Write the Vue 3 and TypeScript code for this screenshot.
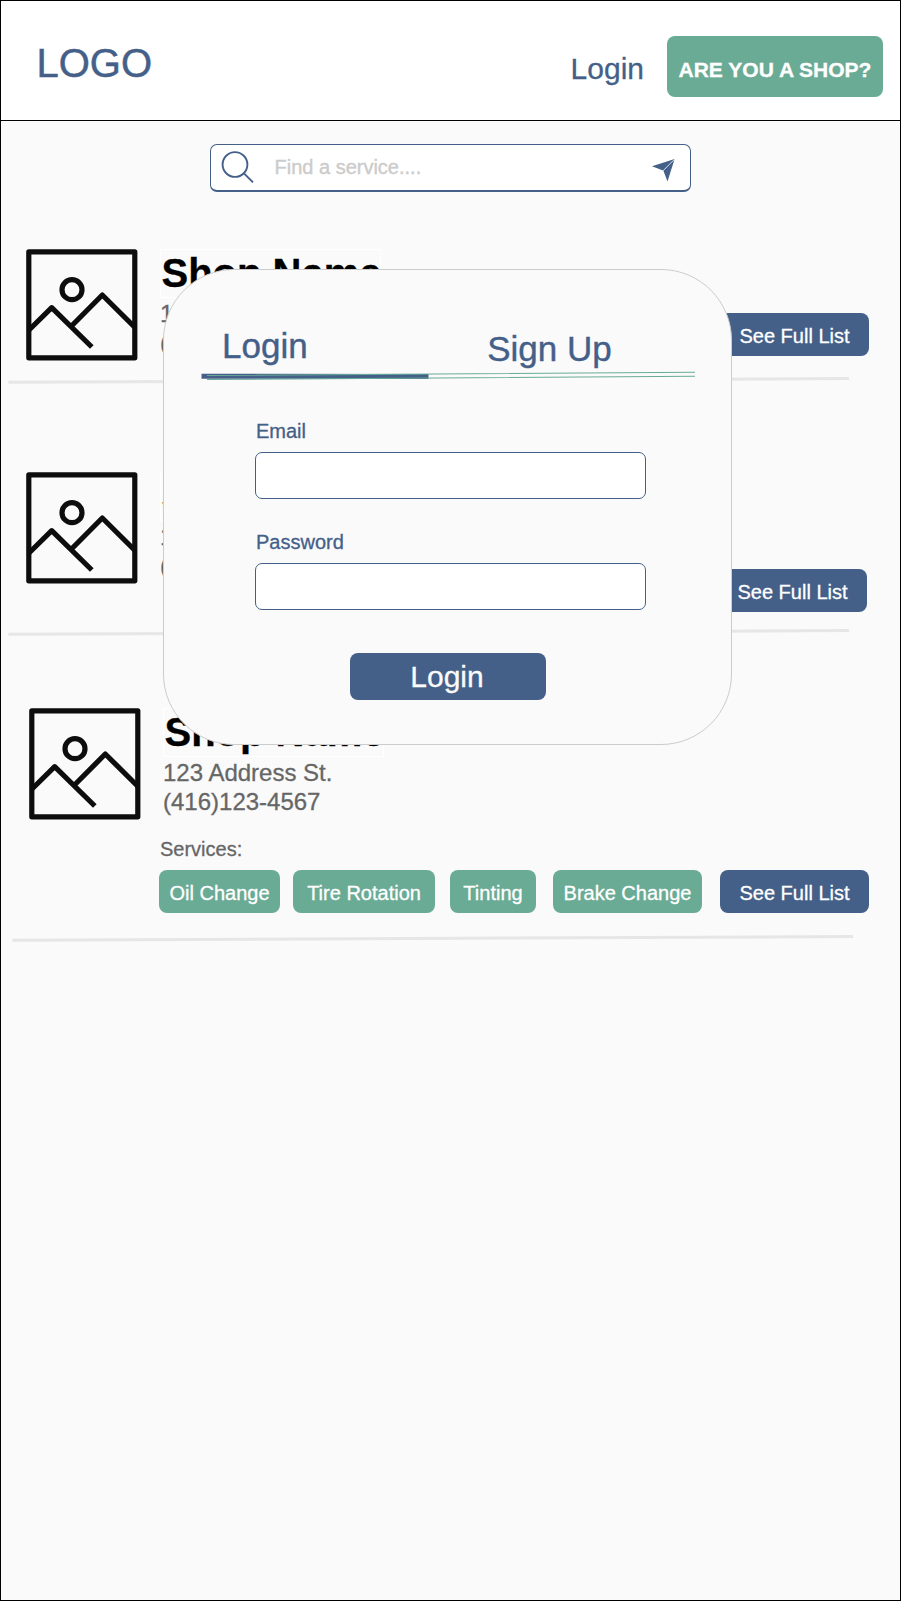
<script setup lang="ts">
import { ref } from 'vue'

interface Shop {
  id: string
  name: string
  address: string
  phone: string
  services: string[]
}

const shops: Shop[] = [
  { id: 'first', name: 'Shop Name', address: '123 Address St.', phone: '(416)123-4567', services: [] },
  { id: 'second', name: 'Shop Name', address: '123 Address St.', phone: '(416)123-4567', services: [] },
  {
    id: 'third',
    name: 'Shop Name',
    address: '123 Address St.',
    phone: '(416)123-4567',
    services: ['Oil Change', 'Tire Rotation', 'Tinting', 'Brake Change'],
  },
]

const query = ref('')
const email = ref('')
const password = ref('')

const pillClass = (service: string): string => 'pill-' + service.split(' ')[0].toLowerCase()
</script>

<template>
  <div class="page">
    <header class="header">
      <div class="logo">LOGO</div>
      <nav class="nav">
        <a class="login-link">Login</a>
        <button class="shop-cta">ARE YOU A SHOP?</button>
      </nav>
    </header>

    <div class="search">
      <svg class="search-icon" width="34" height="34" viewBox="0 0 34 34">
        <circle cx="14" cy="14.5" r="12.4" />
        <path d="M23 23.4L32 32.4" />
      </svg>
      <input v-model="query" class="search-input" placeholder="Find a service...." />
      <svg class="send-icon" width="24" height="24" viewBox="0 0 24 24">
        <path d="M0 7.2L22.6 0L15.5 22.6L11.6 12.2L11 11.5Z" />
        <path class="fold" d="M10.8 12L22.4 0.4" />
      </svg>
    </div>

    <main class="shops">
      <article v-for="shop in shops" :key="shop.id" class="shop" :class="shop.id">
        <div class="main">
          <svg class="picture" width="112" height="112" viewBox="0 0 112 112">
            <rect x="2.8" y="2.8" width="106" height="106" />
            <circle cx="46" cy="40.7" r="10" />
            <path d="M3 81L25.7 58.7L65.8 98M46 76.5L76.3 46L109 78.5" />
          </svg>
          <div class="info">
            <h2 class="name">{{ shop.name }}</h2>
            <p class="line">{{ shop.address }}</p>
            <p class="line phone">{{ shop.phone }}</p>
            <template v-if="shop.services.length">
              <p class="services-title">Services:</p>
              <div class="pills">
                <span v-for="s in shop.services" :key="s" class="pill" :class="pillClass(s)">{{ s }}</span>
              </div>
            </template>
          </div>
          <button class="full-list">See Full List</button>
        </div>
        <svg class="divider" width="842" height="10" viewBox="0 0 842 10">
          <path d="M0.5 6.3L841 2.5" />
        </svg>
      </article>
    </main>

    <section class="modal">
      <div class="tabs">
        <span class="tab">Login</span>
        <span class="tab signup">Sign Up</span>
      </div>
      <svg class="tab-line" width="496" height="12" viewBox="0 0 496 12">
        <path class="active" d="M1.5 6.2L228.5 6.6" />
        <path class="rail" d="M7 5.5L495 2.3M7 9.5L495 6.3" />
      </svg>
      <form class="form" @submit.prevent>
        <label class="label" for="email">Email</label>
        <input id="email" v-model="email" class="field" type="text" />
        <label class="label password" for="password">Password</label>
        <input id="password" v-model="password" class="field" type="password" />
        <button class="submit">Login</button>
      </form>
    </section>
  </div>
</template>

<style>
body {
  margin: 0;
}
</style>

<style scoped>
.page {
  position: relative;
  box-sizing: border-box;
  width: 901px;
  height: 1601px;
  border: 1px solid #000;
  background: #fafafa;
  overflow: hidden;
  font-family: 'Liberation Sans', Arial, sans-serif;
  color: #446088;
  -webkit-text-stroke-width: 0.3px;
}
button,
input {
  box-sizing: border-box;
  margin: 0;
  padding: 0;
  border: 0;
  font-family: inherit;
  outline: none;
}
svg {
  display: block;
  flex: none;
}
.header {
  display: flex;
  justify-content: space-between;
  align-items: flex-start;
  box-sizing: border-box;
  height: 120px;
  padding: 0 17px 0 35.5px;
  border-bottom: 1px solid #000;
  background: #fff;
}
.logo {
  margin-top: 42px;
  font-size: 40px;
  line-height: 40px;
  -webkit-text-stroke-width: 0.5px;
}
.nav {
  display: flex;
  align-items: flex-start;
  gap: 23px;
}
.login-link {
  margin-top: 53px;
  font-size: 30px;
  line-height: 30px;
}
.shop-cta {
  width: 216px;
  height: 61px;
  margin-top: 35px;
  padding-top: 6px;
  border-radius: 8px;
  background: #6aab95;
  color: #fff;
  font-size: 21px;
  font-weight: 700;
  white-space: nowrap;
}
.search {
  display: flex;
  align-items: flex-start;
  box-sizing: border-box;
  width: 481px;
  height: 48px;
  margin: 23px 0 0 209px;
  border: 1px solid #446088;
  border-bottom-width: 2px;
  border-radius: 7px;
  background: #fff;
}
.search-icon {
  margin: 5px 0 0 10px;
  fill: none;
  stroke: #446088;
  stroke-width: 1.9;
}
.search-input {
  width: 370px;
  height: 44px;
  margin-left: 19.5px;
  background: transparent;
  color: #446088;
  font-size: 20px;
  -webkit-text-stroke-width: 0.4px;
}
.search-input::placeholder {
  color: #ccc;
  opacity: 1;
}
.send-icon {
  margin: 14px 0 0 7.5px;
  fill: #446088;
}
.fold {
  stroke: #fff;
  stroke-width: 0.8;
}
.shops {
  padding-top: 57px;
}
.main {
  display: flex;
  align-items: flex-start;
  box-sizing: border-box;
  padding: 0 31px 0 25px;
}
.first .main {
  height: 127px;
}
.second {
  margin-top: 86px;
}
.second .main {
  height: 155.5px;
  padding-right: 33px;
}
.third {
  margin-top: 70.5px;
}
.third .main {
  height: 226px;
  padding-left: 28px;
}
.picture {
  fill: none;
  stroke: #0d0d0d;
  stroke-width: 5.2;
  stroke-linejoin: round;
}
.info {
  width: 221px;
  margin-left: 22px;
}
.name {
  box-sizing: border-box;
  width: 221px;
  height: 49px;
  margin: -0.5px 0 1.5px;
  padding-left: 0.5px;
  border: 1px solid #fff;
  color: #000;
  font-size: 40px;
  font-weight: 700;
  line-height: 47px;
  white-space: nowrap;
}
.line {
  margin: 0;
  color: #666;
  font-size: 24px;
  line-height: 29px;
  white-space: nowrap;
}
.services-title {
  margin: 21px 0 0 -3px;
  color: #666;
  font-size: 20px;
  line-height: 24px;
}
.pills {
  display: flex;
  margin: 8.5px 0 0 -4px;
}
.pill,
.full-list {
  flex: none;
  box-sizing: border-box;
  height: 43px;
  padding-top: 4px;
  border-radius: 8px;
  color: #fff;
  font-size: 20px;
  line-height: 39px;
  text-align: center;
  white-space: nowrap;
}
.pill {
  background: #6aab95;
}
.pill-oil {
  width: 121px;
  margin-right: 13px;
}
.pill-tire {
  width: 142px;
  margin-right: 15px;
}
.pill-tinting {
  width: 86px;
  margin-right: 17px;
}
.pill-brake {
  width: 149px;
}
.full-list {
  width: 149px;
  margin-left: auto;
  background: #446088;
}
.first .full-list {
  margin-top: 64px;
}
.second .full-list {
  margin-top: 97px;
}
.third .full-list {
  margin-top: 161.5px;
}
.divider {
  margin-left: 7px;
  fill: none;
  stroke: #e6e6e6;
  stroke-width: 3;
}
.third .divider {
  margin-left: 11px;
}
.modal {
  position: absolute;
  left: 162px;
  top: 268px;
  box-sizing: border-box;
  width: 569px;
  height: 476px;
  border: 1px solid #ccc;
  border-radius: 71px;
  background: #fafafa;
}
.tabs {
  display: flex;
  align-items: flex-start;
  padding: 58px 0 0 58px;
  height: 42px;
}
.tab {
  font-size: 35px;
  line-height: 36px;
  white-space: nowrap;
  -webkit-text-stroke-width: 0.4px;
}
.signup {
  margin: 3px 0 0 179.5px;
}
.tab-line {
  margin-left: 36px;
  fill: none;
}
.active {
  stroke: #446088;
  stroke-width: 5;
}
.rail {
  stroke: #67ab97;
  stroke-width: 1.1;
}
.form {
  display: flex;
  flex-direction: column;
  padding: 37px 0 0 91px;
}
.label {
  padding-left: 1px;
  font-size: 20px;
  line-height: 24px;
}
.label.password {
  margin-top: 31px;
}
.field {
  width: 391px;
  height: 47px;
  margin-top: 9px;
  padding: 0 10px;
  border: 1px solid #446088;
  border-radius: 7px;
  background: #fff;
  color: #446088;
  font-size: 20px;
}
.submit {
  width: 196px;
  height: 47px;
  margin: 43px 0 0 94.5px;
  padding-right: 1px;
  border-radius: 8px;
  background: #446088;
  color: #fafafa;
  font-size: 30px;
  line-height: 47px;
}
</style>
